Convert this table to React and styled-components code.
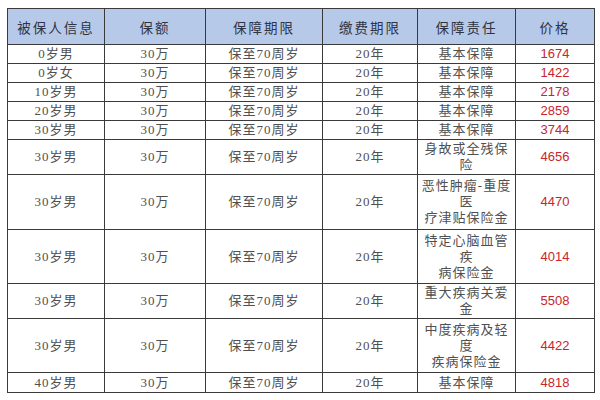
import React from 'react'
import styled, {createGlobalStyle} from "styled-components"

const Global = createGlobalStyle`
    html, body { margin: 0; padding: 0; background: #fff; }
    body { width: 600px; height: 400px; overflow: hidden; }
`

const Page = styled.div`
    padding: 8px 0 0 7px;
`

const Table = styled.table`
    border-collapse: collapse;
    table-layout: fixed;
    width: 587px;
    font-family: "Liberation Serif", "Noto Sans CJK SC", serif;
    font-size: 13px;
    color: #505050;
`

const Th = styled.th`
    background: #b7c9e8;
    border: 1px solid #3a3a3a;
    height: 35px;
    padding: 0;
    font-weight: normal;
    font-size: 13.5px;
    color: #2e3444;
    letter-spacing: 2px;
    text-align: center;
`

const Td = styled.td`
    border: 1px solid #3a3a3a;
    border-top-color: #6a6a6a;
    height: ${p => p.h}px;
    padding: 0;
    text-align: center;
    vertical-align: middle;
    line-height: 16px;
    letter-spacing: 1px;
`

const Price = styled(Td)`
    font-family: "Liberation Sans", Arial, sans-serif;
    color: #c8262c;
    font-size: 13px;
    letter-spacing: 0;
`

const cols = [97, 101, 117, 95, 98, 79]
const heads = ["被保人信息", "保额", "保障期限", "缴费期限", "保障责任", "价格"]

const rows = [
    {who: "0岁男", duty: ["基本保障"], price: 1674, h: 18},
    {who: "0岁女", duty: ["基本保障"], price: 1422, h: 18},
    {who: "10岁男", duty: ["基本保障"], price: 2178, h: 18},
    {who: "20岁男", duty: ["基本保障"], price: 2859, h: 18},
    {who: "30岁男", duty: ["基本保障"], price: 3744, h: 18},
    {who: "30岁男", duty: ["身故或全残保", "险"], price: 4656, h: 34},
    {who: "30岁男", duty: ["恶性肿瘤-重度", "医", "疗津贴保险金"], price: 4470, h: 54},
    {who: "30岁男", duty: ["特定心脑血管", "疾", "病保险金"], price: 4014, h: 53},
    {who: "30岁男", duty: ["重大疾病关爱", "金"], price: 5508, h: 34},
    {who: "30岁男", duty: ["中度疾病及轻", "度", "疾病保险金"], price: 4422, h: 53},
    {who: "40岁男", duty: ["基本保障"], price: 4818, h: 19},
]

const App = () => {
    return (
        <Page>
            <Global />
            <Table>
                <colgroup>
                    {cols.map((w, i) => <col key={i} style={{width: w}} />)}
                </colgroup>
                <thead>
                    <tr>{heads.map(t => <Th key={t}>{t}</Th>)}</tr>
                </thead>
                <tbody>
                    {rows.map((r, i) => (
                        <tr key={i}>
                            <Td h={r.h}>{r.who}</Td>
                            <Td h={r.h}>30万</Td>
                            <Td h={r.h}>保至70周岁</Td>
                            <Td h={r.h}>20年</Td>
                            <Td h={r.h}>
                                {r.duty.map((l, j) => <div key={j}>{l}</div>)}
                            </Td>
                            <Price h={r.h}>{r.price}</Price>
                        </tr>
                    ))}
                </tbody>
            </Table>
        </Page>
    )
}

export default App
